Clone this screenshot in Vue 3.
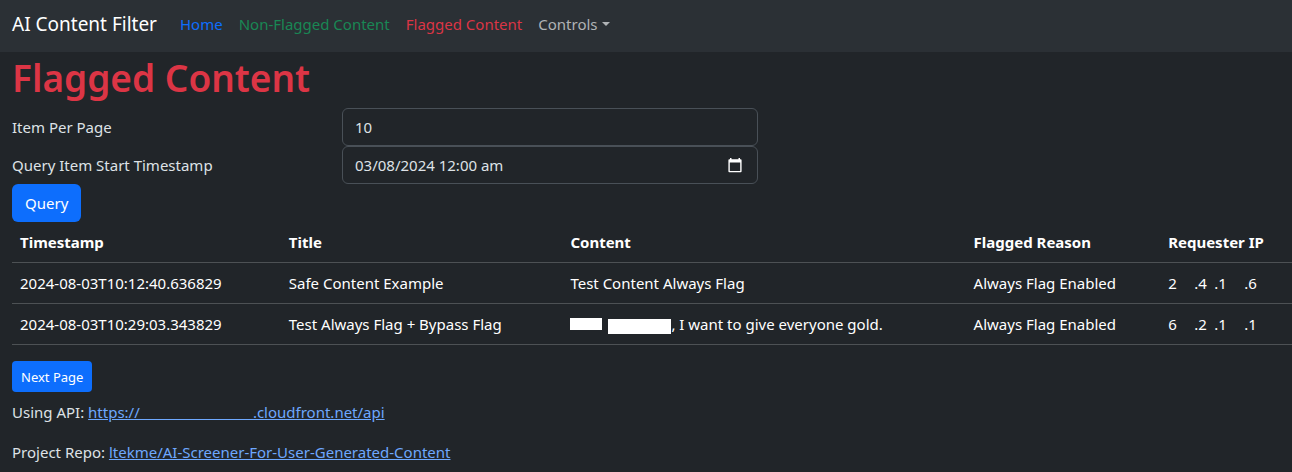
<script setup>
import { ref } from 'vue'

const itemsPerPage = ref('10')
const startTimestamp = ref('03/08/2024 12:00 am')

const hiddenHost = '\u00a0'.repeat(29)

const rows = [
  {
    timestamp: '2024-08-03T10:12:40.636829',
    title: 'Safe Content Example',
    content: 'Test Content Always Flag',
    redacted: false,
    reason: 'Always Flag Enabled',
    ip: ['2', '.4', '.1', '.6']
  },
  {
    timestamp: '2024-08-03T10:29:03.343829',
    title: 'Test Always Flag + Bypass Flag',
    content: ', I want to give everyone gold.',
    redacted: true,
    reason: 'Always Flag Enabled',
    ip: ['6', '.2', '.1', '.1']
  }
]
</script>

<template>
  <div class="page">
    <nav class="navbar">
      <a class="brand" href="#">AI Content Filter</a>
      <a class="nav-link home" href="#">Home</a>
      <a class="nav-link safe" href="#">Non-Flagged Content</a>
      <a class="nav-link flagged" href="#">Flagged Content</a>
      <button class="nav-link controls" type="button">Controls<span class="caret"></span></button>
    </nav>

    <main class="content">
      <h1>Flagged Content</h1>

      <form @submit.prevent>
        <div class="field">
          <label for="items">Item Per Page</label>
          <div class="control">
            <input id="items" v-model="itemsPerPage" type="text" inputmode="numeric" />
          </div>
        </div>
        <div class="field">
          <label for="start">Query Item Start Timestamp</label>
          <div class="control">
            <input id="start" v-model="startTimestamp" type="text" />
            <button class="picker" type="button" aria-label="Pick a date">
              <svg width="14" height="15" viewBox="0 0 14 15">
                <path fill="#fff" fill-rule="evenodd" d="M2 0h1.5v1.3h7V0H12v1.3h.7q.9 0 .9 1v11q0 1-.9 1H1.3q-.9 0-.9-1v-11q0-1 .9-1H2zM1.8 4.6v8.3h10.4V4.6z" />
              </svg>
            </button>
          </div>
        </div>
        <button class="btn" type="submit">Query</button>
      </form>

      <table>
        <colgroup>
          <col class="c-time" />
          <col class="c-title" />
          <col class="c-content" />
          <col class="c-reason" />
          <col />
        </colgroup>
        <thead>
          <tr>
            <th scope="col">Timestamp</th>
            <th scope="col">Title</th>
            <th scope="col">Content</th>
            <th scope="col">Flagged Reason</th>
            <th scope="col">Requester IP</th>
          </tr>
        </thead>
        <tbody>
          <tr v-for="row in rows" :key="row.timestamp">
            <td>{{ row.timestamp }}</td>
            <td>{{ row.title }}</td>
            <td><template v-if="row.redacted"><span class="mask short"></span><span class="mask long"></span></template>{{ row.content }}</td>
            <td>{{ row.reason }}</td>
            <td><span class="ip"><span v-for="(part, i) in row.ip" :key="i">{{ part }}</span></span></td>
          </tr>
        </tbody>
      </table>

      <button class="btn small" type="button">Next Page</button>

      <p>Using API: <a href="#">https://{{ hiddenHost }}.cloudfront.net/api</a></p>
      <p>Project Repo: <a href="#">ltekme/AI-Screener-For-User-Generated-Content</a></p>
    </main>
  </div>
</template>

<style>
body {
  background: #212529;
}
</style>

<style scoped>
.page {
  min-height: 100vh;
  overflow: hidden;
  box-sizing: border-box;
  background: #212529;
  color: #dee2e6;
  font: 15px/24px "Noto Sans", "Open Sans", sans-serif;
}
.page *,
.page *::before {
  box-sizing: border-box;
}
.navbar {
  display: flex;
  align-items: center;
  height: 52px;
  padding: 0 12px 4px;
  background: #2b3035;
}
.brand {
  margin-right: 15px;
  color: #fff;
  font-size: 19px;
  text-decoration: none;
}
.nav-link {
  padding: 0 8px;
  border: 0;
  background: none;
  font: inherit;
  text-decoration: none;
}
.home { color: #0d6efd; }
.safe { color: #198754; }
.flagged { color: #dc3545; }
.controls {
  display: flex;
  align-items: center;
  gap: 4px;
  color: #b0b3b6;
}
.caret {
  border: 4px solid transparent;
  border-top-color: currentColor;
  border-bottom: 0;
}
.content {
  padding-left: 12px;
}
h1 {
  margin: 0;
  padding: 2px 0 6px;
  color: #dc3545;
  font-size: 37px;
  font-weight: 600;
  line-height: 48px;
}
.field {
  display: grid;
  grid-template-columns: 330px minmax(0, 416px);
  align-items: center;
}
.control {
  position: relative;
}
input {
  display: block;
  width: 100%;
  height: 38px;
  padding: 6px 12px;
  border: 1px solid #495057;
  border-radius: 6px;
  background: #212529;
  color: #dee2e6;
  font: inherit;
}
.picker {
  position: absolute;
  right: 13px;
  top: 8px;
  display: flex;
  align-items: center;
  height: 22px;
  padding: 0 3px;
  border: 0;
  background: none;
}
.btn {
  display: block;
  height: 38px;
  padding: 0 13px;
  border: 0;
  border-radius: 6px;
  background: #0d6efd;
  color: #fff;
  font: inherit;
}
.btn.small {
  height: 31px;
  margin: 16px 0 8px;
  padding: 0 9px;
  border-radius: 4px;
  font-size: 13px;
}
table {
  width: 100%;
  border-collapse: separate;
  border-spacing: 0;
  table-layout: fixed;
  color: #fff;
}
.c-time { width: 21%; }
.c-title { width: 22%; }
.c-content { width: 31.5%; }
.c-reason { width: 15.2%; }
th,
td {
  height: 41px;
  padding: 8px;
  border-bottom: 1px solid #4d5154;
  text-align: left;
  white-space: nowrap;
}
th {
  font-weight: 700;
}
.mask {
  display: inline-block;
  background: #fff;
}
.mask.short {
  width: 32px;
  height: 12px;
  margin-right: 6px;
}
.mask.long {
  width: 63px;
  height: 15px;
  vertical-align: -4px;
}
.ip {
  display: grid;
  grid-template-columns: 26px 20px 30px auto;
}
p {
  margin: 0 0 16px;
}
p a {
  color: #6ea8fe;
}
</style>
